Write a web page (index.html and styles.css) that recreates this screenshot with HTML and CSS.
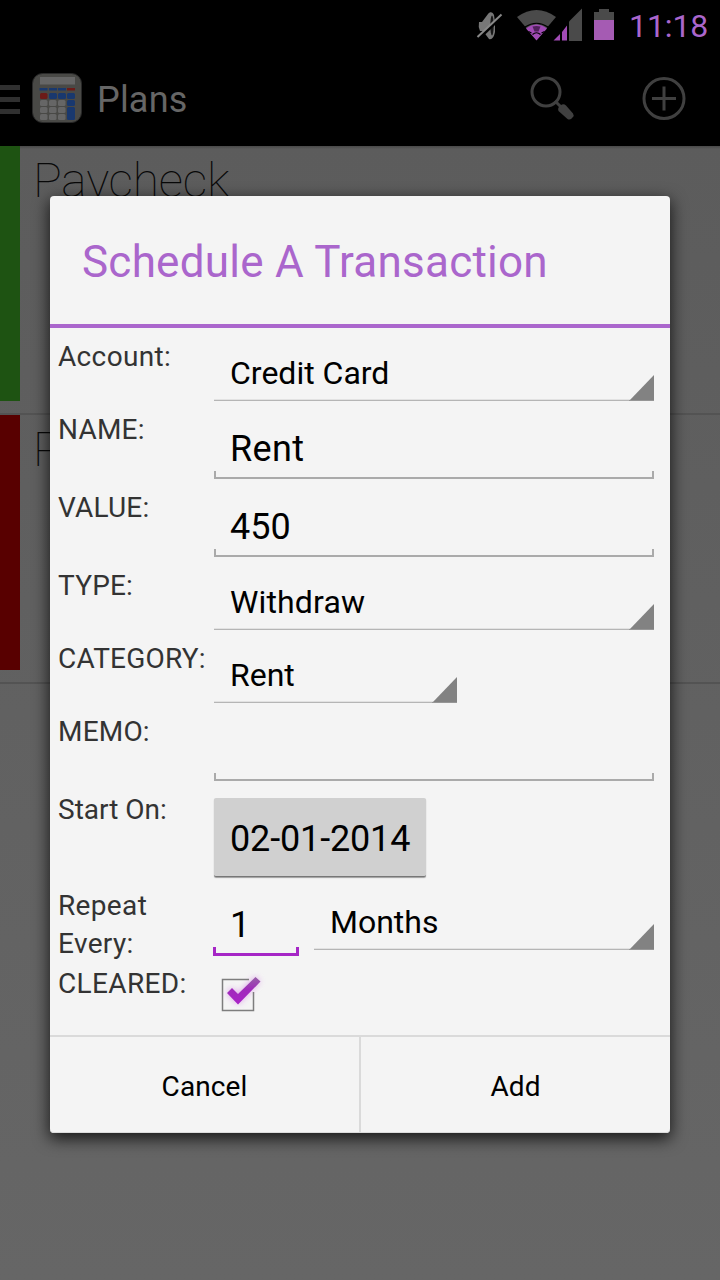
FILE: index.html
```html
<!DOCTYPE html>
<html lang="en">
<head>
<meta charset="utf-8">
<title>Plans</title>
<link rel="stylesheet" href="styles.css">
</head>
<body>
<div class="screen">
  <header class="status-bar">
    <svg class="status-icons" width="150" height="50" viewBox="470 0 150 50">
      <path fill="#777" d="M479 22h3l6-8c2-3 5-2 6 1l1 7v10c-1 5-3 8-6 7l-6-8h-3q-2-4-1-9z"/>
      <ellipse cx="492" cy="25.500" rx="1.700" ry="10" fill="#171717"/>
      <path stroke="#000" stroke-width="3.500" d="M478.500 38.500l24-23"/>
      <path stroke="#888" stroke-width="2" d="M477.500 37l24-22.500"/>
      <path fill="#4a4a4a" d="M517 17Q536.500 3 556 17L536.500 40z"/>
      <path fill="#a14bb5" d="M526 28.500Q536.500 20.500 547 28.500L536.500 40.500z"/>
      <path fill="none" stroke="#000" stroke-width="1.200" d="M525 27Q536.500 19.500 548 27M528.500 31.500l3 1.500M544.500 31.500l-3 1.500M532.500 34.500Q536.500 31 540.500 34.500"/>
      <path fill="#50205c" d="M532.500 26.500q4-1 8 0l-2 5h-4z"/>
      <path fill="#4a4a4a" d="M569 21.500L582 8.500V41H569z"/>
      <path fill="#a14bb5" d="M553.500 40.500L560 34v6.500zM562 32l5-6.500v15h-5z"/>
      <path fill="#4a4a4a" d="M594 12h5V9h10v3h5v9h-20z"/>
      <path fill="#a55bb3" d="M594 20h20v20h-20z"/>
    </svg>
    <span class="clock">11:18</span>
  </header>
  <nav class="action-bar">
    <div class="drawer-icon"><i></i><i></i><i></i></div>
    <svg class="app-icon" width="50" height="50" viewBox="0 0 50 50">
      <rect x=".5" y=".5" width="49" height="49" rx="10" fill="#494946" stroke="#292929"/>
      <rect x="8" y="4" width="35" height="7.500" fill="#666"/>
      <path fill="#19386e" d="M7.500 15h8v2.500h-8zM17 15h8v2.500h-8zM26 15h8v2.500h-8z"/>
      <path fill="#6c1b18" d="M35 15h8v2.500h-8z"/>
      <rect x="8" y="20" width="7.500" height="6" rx="1.500" fill="#6c1b18"/>
      <g fill="#19386e"><rect x="17" y="20" width="8" height="6" rx="1.500"/><rect x="26" y="20" width="8" height="6" rx="1.500"/><rect x="35" y="20" width="8" height="6" rx="1.500"/><rect x="35" y="27" width="8" height="6" rx="1.500"/><rect x="35" y="34" width="8" height="13" rx="1.500"/></g>
      <g fill="#666"><rect x="8" y="27" width="7.500" height="6" rx="1.500"/><rect x="17" y="27" width="7.500" height="6" rx="1.500"/><rect x="26" y="27" width="7.500" height="6" rx="1.500"/><rect x="8" y="34" width="7.500" height="6" rx="1.500"/><rect x="17" y="34" width="7.500" height="6" rx="1.500"/><rect x="26" y="34" width="7.500" height="6" rx="1.500"/><rect x="8" y="41" width="7.500" height="6" rx="1.500"/><rect x="17" y="41" width="7.500" height="6" rx="1.500"/><rect x="26" y="41" width="7.500" height="6" rx="1.500"/></g>
    </svg>
    <h1 class="app-title">Plans</h1>
    <svg class="action-icon" width="46" height="46" viewBox="529 75 46 46">
      <circle cx="546" cy="92" r="14" fill="none" stroke="#404040" stroke-width="3"/>
      <path stroke="#404040" stroke-width="3" d="M555 101l6 6"/>
      <path fill="#404040" d="M559 106.500l3-2q2-1 4 1l7 8q1.500 2-.5 4-2 3-5 1.500l-9-8q-1-2 .5-4.500z"/>
    </svg>
    <svg class="action-icon" width="46" height="46" viewBox="641 75 46 46">
      <circle cx="664" cy="98.500" r="20" fill="none" stroke="#404040" stroke-width="3"/>
      <path stroke="#404040" stroke-width="3" d="M652 98.500h24M664 86.500v24"/>
    </svg>
  </nav>
  <main class="plans">
    <section class="plan"><span class="stripe deposit"></span><h2>Paycheck</h2></section>
    <section class="plan"><span class="stripe withdraw"></span><h2 class="clipped">R</h2></section>
  </main>

  <div class="dialog">
    <h2 class="dialog-title"><span>Schedule A Transaction</span></h2>
    <form class="form">
      <label class="l-account">Account:</label>
      <div class="cell"><div class="spinner">Credit Card</div></div>
      <label class="l-name">NAME:</label>
      <div class="cell"><div class="edit s-rent">Rent</div></div>
      <label class="l-name">VALUE:</label>
      <div class="cell"><div class="edit">450</div></div>
      <label class="l-name">TYPE:</label>
      <div class="cell"><div class="spinner s-withdraw">Withdraw</div></div>
      <label class="l-name">CATEGORY:</label>
      <div class="cell"><div class="spinner narrow">Rent</div></div>
      <label class="l-name">MEMO:</label>
      <div class="cell"><div class="edit"></div></div>
      <label>Start On:</label>
      <div class="cell date"><div class="date-button">02-01-2014</div></div>
      <label class="l-repeat">Repeat<br>Every:</label>
      <div class="cell repeat"><div class="edit active">1</div><div class="spinner">Months</div></div>
      <label class="l-cleared">CLEARED:</label>
      <div class="cell last">
        <svg class="check" width="60" height="50" viewBox="214 970 60 50">
          <defs>
            <filter id="glow" x="-50%" y="-50%" width="200%" height="200%"><feGaussianBlur stdDeviation="3"/></filter>
            <linearGradient id="tick" x1="0" y1="0" x2="0" y2="1"><stop offset="0" stop-color="#9660a6"/><stop offset=".45" stop-color="#a02abb"/><stop offset="1" stop-color="#aa22c8"/></linearGradient>
          </defs>
          <path fill="#d070e4" opacity=".65" filter="url(#glow)" d="M227 993l5-5 6 6 17-17 5 4-22 23z"/>
          <path fill="none" stroke="#7d7d7d" stroke-width="1.500" d="M249 979.500H222.500V1010.500H253.500V992"/>
          <path fill="url(#tick)" d="M227 993l5-5 6 6 17.500-17 5 4.500-22.500 23z"/>
        </svg>
      </div>
    </form>
    <footer class="buttons"><div class="btn">Cancel</div><div class="btn">Add</div></footer>
  </div>
</div>
</body>
</html>
```

FILE: styles.css
```css
* { box-sizing: border-box; }
body { margin: 0; font-family: Roboto, "Noto Sans", sans-serif; background: #646464; }
h1, h2 { margin: 0; font-weight: 400; }
.screen { position: relative; width: 720px; height: 1280px; overflow: hidden; background: linear-gradient(#5c5c5c 146px, #666 1280px); }

.status-bar { display: flex; justify-content: flex-end; height: 50px; background: #000; padding-right: 12px; }
.status-icons { margin-right: 9px; }
.clock { width: 79px; line-height: 53px; font-size: 32px; letter-spacing: -.1px; color: #aa66cc; white-space: nowrap; }

.action-bar { display: flex; align-items: center; height: 96px; background: #000; padding-right: 33px; }
.drawer-icon { display: flex; flex-direction: column; gap: 7px; width: 20px; margin: 2px 12px 0 0; }
.drawer-icon i { height: 5px; background: #303030; }
.app-title { margin: 3px auto 0 15px; font-size: 36px; line-height: 42px; letter-spacing: .2px; color: #666; }
.action-icon { margin-left: 66px; }

.plans { background: linear-gradient(#484848, transparent) top / 100% 3px no-repeat; }
.plan { display: flex; height: 269px; border-bottom: 2px solid #535353; }
.stripe { width: 20px; height: 255px; }
.deposit { background: #1e5312; }
.withdraw { background: #580000; }
.plan h2 { margin: 6px 0 0 13px; font-size: 48px; line-height: 58px; font-weight: 100; letter-spacing: -.2px; color: #080808; }
.plan .clipped { width: 17px; overflow: hidden; }

.dialog { position: absolute; left: 50px; top: 196px; width: 620px; height: 937px; border-radius: 4px; background: #f4f4f4; box-shadow: 0 5px 16px 1px rgba(0,0,0,.75), inset 0 -1px #dcdcdc; }
.dialog-title { height: 132px; padding: 40px 32px 0; border-bottom: 4px solid #aa66cc; font-size: 44px; line-height: 52px; letter-spacing: .24px; color: #aa66cc; white-space: nowrap; }

.form { display: grid; grid-template-columns: 156px 440px; align-items: start; height: 707px; padding: 10px 0 0 8px; grid-template-rows: 73px 78px 78px 73px 73px 78px 96px 78px 68px; }
.form label { font-size: 28px; line-height: 38px; color: #333; white-space: nowrap; }
.form .l-account, .form .l-repeat, .form .l-cleared { letter-spacing: .35px; }
.form .l-name { letter-spacing: .2px; }
.cell { color: #000; }
.spinner { position: relative; height: 63px; padding-left: 16px; font-size: 32px; line-height: 70px; border-bottom: 1px solid #b5b5b5; box-shadow: inset 0 -1px #e2e2e2; white-space: nowrap; }
.spinner::after { content: ""; position: absolute; right: 0; bottom: -1px; width: 25px; height: 25px; background: #828282; border-bottom: 1px solid #969696; clip-path: polygon(100% 0, 100% 100%, 0 100%); }
.s-withdraw { letter-spacing: .15px; }
.narrow { width: 243px; }
.edit { height: 68px; padding-left: 16px; font-size: 36px; line-height: 76px; background: linear-gradient(#aaa, #aaa) left bottom / 2px 8px no-repeat, linear-gradient(#aaa, #aaa) right bottom / 2px 8px no-repeat, linear-gradient(#aaa, #aaa) bottom / 100% 2px no-repeat; }
.s-rent { letter-spacing: .4px; }
.date { padding-top: 7px; }
.date-button { width: 212px; height: 79px; padding-left: 16px; background: #d0d0d0; border-radius: 2px; border-bottom: 1px solid #777; box-shadow: 0 1px 1px rgba(0,0,0,.35); font-size: 36px; line-height: 82px; letter-spacing: -.15px; white-space: nowrap; }
.repeat { display: flex; gap: 15px; align-items: flex-start; margin-left: -1px; }
.repeat .spinner { flex: 1; }
.active { width: 86px; height: 69px; padding-left: 17px; background: linear-gradient(#a626c6, #a626c6) left bottom / 3px 9px no-repeat, linear-gradient(#a626c6, #a626c6) right bottom / 3px 9px no-repeat, linear-gradient(#a626c6, #a626c6) bottom / 100% 3px no-repeat; }
.last { padding-top: 5px; }
.check { display: block; }

.buttons { display: flex; height: 98px; border-top: 2px solid #dadada; }
.btn { flex: 1; text-align: center; font-size: 28px; line-height: 100px; height: 96px; letter-spacing: .1px; color: #000; }
.btn + .btn { border-left: 2px solid #dadada; }
```
